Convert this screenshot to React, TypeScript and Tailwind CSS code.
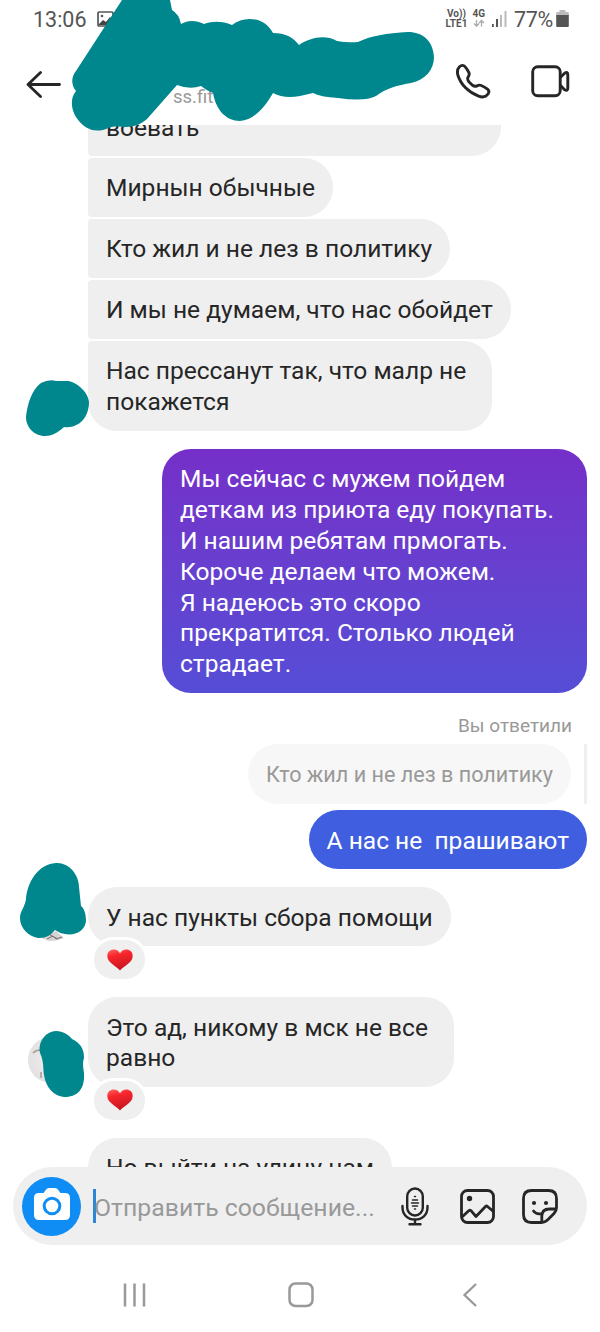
import type { ReactNode } from "react";

const TEAL = "#00868d";

function Bubble({ children, className }: { children: ReactNode; className: string }) {
  return (
    <div className={`w-fit whitespace-pre px-[18px] pb-[12.5px] pt-[15.5px] text-[24.55px] leading-[30.8px] ${className}`}>
      {children}
    </div>
  );
}

function Heart({ id }: { id: string }) {
  return (
    <div className="relative z-10 -mt-[9px] ml-[3px] flex h-[45px] w-[57px] shrink-0 items-center justify-center rounded-full border-[3px] border-white bg-[#efefef]">
      <svg width="26" height="22" viewBox="0 0 26 23" preserveAspectRatio="none">
        <defs>
          <linearGradient id={id} x1="0" y1="0" x2="0.3" y2="1">
            <stop offset="0" stopColor="#ff6660" />
            <stop offset="0.35" stopColor="#f7262b" />
            <stop offset="1" stopColor="#c91522" />
          </linearGradient>
        </defs>
        <path d="M13 22.5C10 18 .3 14.500 .3 7.200 .3 3 3.300 .6 6.600 .6c3 0 5.200 1.500 6.400 4 1.200-2.500 3.400-4 6.400-4 3.300 0 6.300 2.400 6.300 6.600C25.700 14.500 16 18 13 22.500z" fill={`url(#${id})`} />
      </svg>
    </div>
  );
}

function StatusBar() {
  return (
    <div className="flex h-10 items-start pl-[33px] pr-[31px] pt-[7px] text-[#555]">
      <span className="mt-px text-[21.5px] leading-6">13:06</span>
      <svg className="ml-[10px] mt-1" width="17" height="16" viewBox="0 0 17 16">
        <rect x="1" y="1" width="15" height="14" rx="1" fill="none" stroke="#555" strokeWidth="1.700" />
        <path d="M2 13l4-4 3 2 4-5 3 3v5H2z" fill="#444" />
        <circle cx="5" cy="5" r="1.300" fill="#555" />
      </svg>
      <div className="ml-auto flex items-start">
        <div className="mt-[2px] flex flex-col items-center text-[10px] font-bold leading-[9.500px]">
          <span>Vo))</span>
          <span>LTE1</span>
        </div>
        <div className="ml-[5px] mt-[2px] flex flex-col items-center text-[10px] font-bold leading-[10px]">
          <span>4G</span>
          <svg width="12" height="8" viewBox="0 0 12 8" fill="none" stroke="#aaa" strokeWidth="1.300">
            <path d="M3.500 1v6M1 4.500l2.500 2.500L6 4.500M8.500 7.500v-6M6 4l2.500-2.500L11 4" />
          </svg>
        </div>
        <svg className="ml-[7px] mt-1" width="15" height="16" viewBox="0 0 15 16">
          <rect x="0" y="13" width="1.800" height="3" fill="#555" />
          <rect x="4" y="8" width="2" height="8" fill="#555" />
          <rect x="8" y="4" width="2" height="12" fill="#bbb" />
          <rect x="12.500" y="0" width="2" height="16" fill="#bbb" />
        </svg>
        <span className="ml-[7px] mt-px text-[21.500px] leading-6 tracking-[-0.3px]">77%</span>
        <svg className="ml-[3px] mt-[3px]" width="13" height="17" viewBox="0 0 13 17">
          <path d="M3.500 0h6v2H12q.8 0 .8.800V6H.2V2.800Q.2 2 1 2h2.500z" fill="#bbb" />
          <path d="M.2 5h12.600v11q0 1-1 1H1.200q-1 0-1-1z" fill="#555" />
        </svg>
      </div>
    </div>
  );
}

function Header() {
  return (
    <header className="flex h-[85px] items-start pl-[26px] pr-[30px]">
      <svg className="mt-[30px]" width="36" height="28" viewBox="0 0 36 28" fill="none" stroke="#262626" strokeWidth="2.800" strokeLinecap="round" strokeLinejoin="round">
        <path d="M33.500 14.500H2M14.500 2.500L2 14.500l12.500 12" />
      </svg>
      <span className="ml-[111px] mt-[45px] text-[18.500px] leading-6 text-[#999]">ss.fit</span>
      <svg className="ml-auto mt-[23px]" width="36" height="37" viewBox="0 0 36 37" fill="none" stroke="#262626" strokeWidth="2.900" strokeLinejoin="round">
        <path d="M4.500 3.800C6.500 1.900 8.600 1.900 10 3.600C11.800 5.600 13 7.600 14 9.800C14.800 11.600 14 12.700 13 14.300C12 16.200 12.600 17.200 14.300 19.200L17 21.800C19 23.500 20.300 23.800 21.900 22.900C23.600 22 24.600 21.700 26.300 22.500C28.500 23.400 30.500 24.600 32.500 26.200C34.500 27.800 34.300 29.200 33 31C31 33.800 27.700 34.700 23.600 33.200C13.500 29.500 5.800 21.500 3 12.500C1.900 8.800 2.400 5.900 4.500 3.800Z" />
      </svg>
      <svg className="ml-[40px] mt-[25px]" width="39" height="33" viewBox="0 0 39 33" fill="none" stroke="#262626" strokeWidth="2.900" strokeLinejoin="round">
        <rect x="1.700" y="1.700" width="27.500" height="29" rx="5" />
        <path d="M29.300 12.500l4.300-4.300q3.200-1.800 3.200 1.500v13.500q0 3.300-3.200 1.500l-4.300-4.300" />
      </svg>
    </header>
  );
}

function Composer() {
  return (
    <div className="relative z-10 mx-[13px] flex h-[78px] items-center rounded-full bg-[#efefef] pl-[9px] pr-[29px]">
      <div className="flex size-[59px] shrink-0 items-center justify-center rounded-full bg-[#0f8df5]">
        <svg className="-mt-1" width="36" height="33" viewBox="0 0 36 33">
          <path d="M11 3q1.500-3 4-3h6q2.500 0 4 3l1.500 2H31q5 0 5 5v17q0 5-5 5H5q-5 0-5-5V10q0-5 5-5h4.500z" fill="#fff" />
          <circle cx="18" cy="18" r="7.800" fill="none" stroke="#0f8df5" strokeWidth="3" />
        </svg>
      </div>
      <div className="ml-3 h-[34px] w-[3px] shrink-0 bg-[#2f86d6]" />
      <span className="-ml-[2px] mt-[3px] whitespace-nowrap text-[24.8px] leading-8 text-[#999]">Отправить сообщение...</span>
      <div className="ml-auto flex items-center text-[#262626]">
        <svg className="mt-px" width="28" height="39" viewBox="0 0 28 39" fill="none" stroke="currentColor" strokeWidth="2.400" strokeLinecap="round">
          <rect x="6.200" y="1.500" width="15.600" height="27" rx="7.800" />
          <path d="M1.500 19v1.500C1.500 28 7 32.500 14 32.500S26.500 28 26.500 20.500V19M14 32.500V37M8.500 37.200h11" />
          <path d="M13.500 9.500h1M11.500 13h5M10.500 16h7M11.500 19h5M13.500 22h1" strokeWidth="1.500" />
        </svg>
        <svg className="ml-[31px]" width="35" height="35" viewBox="0 0 35 35" fill="none" stroke="currentColor" strokeWidth="2.800" strokeLinejoin="round">
          <rect x="1.500" y="1.500" width="32" height="32" rx="6" />
          <path d="M2 28l7-6.500q1-.8 2 .2L16 27.500 25.500 17.500q1-1 2 0L34 23" />
          <circle cx="9.500" cy="9.500" r="2.700" fill="currentColor" stroke="none" />
        </svg>
        <svg className="ml-[27px]" width="36" height="35" viewBox="0 0 36 35" fill="none" stroke="currentColor" strokeWidth="2.800" strokeLinejoin="round" strokeLinecap="round">
          <path d="M9.500 1.500h17q8 0 8 8v9q0 3.500-2.500 6l-6.500 6.500q-2.500 2.500-6 2.500H9.500q-8 0-8-8V9.500q0-8 8-8z" />
          <path d="M19.800 33v-5.500q0-7.500 7.500-7.500h6.500M11.500 22q3 4 8.500 2.500" />
          <circle cx="12" cy="14" r="2.100" fill="currentColor" stroke="none" />
          <circle cx="24" cy="14" r="2.100" fill="currentColor" stroke="none" />
        </svg>
      </div>
    </div>
  );
}

function NavBar() {
  return (
    <nav className="flex h-[87px] items-start justify-between pl-[122px] pr-[122px] pt-[37px] text-[#999]">
      <svg width="25" height="26" viewBox="0 0 25 26" stroke="currentColor" strokeWidth="2.500">
        <path d="M3 1.500v23M12.500 1.500v23M22 1.500v23" />
      </svg>
      <svg className="-ml-[7px]" width="26" height="26" viewBox="0 0 26 26" fill="none" stroke="currentColor" strokeWidth="2.500">
        <rect x="1.500" y="1.500" width="23" height="22.500" rx="6" />
      </svg>
      <svg width="16" height="26" viewBox="0 0 16 26" fill="none" stroke="currentColor" strokeWidth="2.300">
        <path d="M14 2L2.500 13 14 24" />
      </svg>
    </nav>
  );
}

function Scribbles() {
  return (
    <svg className="pointer-events-none absolute left-0 top-0 z-20" width="600" height="1332" viewBox="0 0 600 1332">
      <defs>
        <radialGradient id="avatar">
          <stop offset="0" stopColor="#f0eeee" />
          <stop offset="1" stopColor="#e3e1e1" />
        </radialGradient>
      </defs>
      <circle cx="51" cy="1060" r="23" fill="url(#avatar)" />
      <path d="M33 1053q3-3 7-3M41 1072v6" stroke="#a99c91" strokeWidth="1.500" fill="none" />
      <path d="M41 938l15-7 8 7q-6 3-15 3z" fill="#d5d3d3" />
      <path d="M47 939l6-3 3 3 6-2M50 935l8 4" stroke="#77716f" strokeWidth="1" fill="none" />
      <g fill={TEAL}>
        <path d="M122 0L76 71C71 77 71 85 76 91C70 98 71 109 76 117C84 129 94 133 106 129Q113 125 123 127C134 127 140 125 147 119L177 85Q190 90 201 86Q207 91 213 93C216 110 226 121 240 121C253 120 264 109 273 93Q284 99 300 96L313 93Q320 97 338 98Q365 102 376 96C387 88 395 86 411 83C426 80 434 69 434 57C433 41 423 32 408 32C387 33 370 36 358 42Q347 43 337 41C324 34 310 38 299 45C293 37 285 33 273 33C265 17 244 15 232 25C222 21 213 21 204 24C196 20 188 20 181 24Q179 14 172 10L170 0Z" />
        <path d="M41 383Q49 379 56 381H67C75 381 88 391 89 402C89 418 78 429 64 427C60 431 53 436 45 436C34 436 26 427 26 417C27 405 32 389 41 383Z" />
        <path d="M56 863C68 862 79 874 79 887L81 906C85 909 86 916 86 921C85 931 75 936 65 934Q59 933 55 930Q48 939 38 938C28 936 20 928 20 918C20 911 25 907 26 899C27 884 37 864 56 863Z" />
        <path d="M56 1031C63 1031 69 1035 72 1039C80 1043 84 1048 84 1058Q82 1063 84 1073C85 1090 77 1097 64 1097C54 1096 46 1088 44 1075C43 1069 44 1061 40 1053C38 1043 44 1032 56 1031Z" />
      </g>
    </svg>
  );
}

export default function App() {
  const incoming = "rounded-l-[4px] rounded-r-[29px] bg-[#efefef] text-[#262626]";
  return (
    <div className="relative flex h-[1332px] w-[600px] flex-col overflow-hidden bg-white font-['Roboto','Noto_Sans',sans-serif]">
      <StatusBar />
      <Header />
      <main className="flex h-[1042px] shrink-0 flex-col overflow-hidden pl-[88px] pr-[13px]">
        <div className="-mt-[28px] flex shrink-0 flex-col gap-[2.200px]">
          <Bubble className={`${incoming} w-[413px]!`}>воевать</Bubble>
          <Bubble className={incoming}>Мирнын обычные</Bubble>
          <Bubble className={incoming}>Кто жил и не лез в политику</Bubble>
          <Bubble className={incoming}>И мы не думаем, что нас обойдет</Bubble>
          <Bubble className={`${incoming} rounded-bl-[29px]! w-[404px]!`}>{"Нас прессанут так, что малр не\nпокажется"}</Bubble>
        </div>
        <Bubble className="mt-[18.400px] w-[425px]! shrink-0 self-end rounded-[29px] bg-linear-to-b from-[#752fc8] to-[#554dd6] text-white">
          {"Мы сейчас с мужем пойдем\nдеткам из приюта еду покупать.\nИ нашим ребятам прмогать.\nКороче делаем что можем.\nЯ надеюсь это скоро\nпрекратится. Столько людей\nстрадает."}
        </Bubble>
        <div className="mt-[21px] shrink-0 self-end pr-[15px] text-[19px] leading-6 text-[#999]">Вы ответили</div>
        <div className="mt-[6.500px] flex shrink-0 gap-[13px] self-end">
          <div className="flex h-[60px] items-center whitespace-pre rounded-full bg-[#f7f7f7] px-[18px] pt-[2px] text-[21.600px] text-[#999]">Кто жил и не лез в политику</div>
          <div className="w-[3px] bg-[#efefef]" />
        </div>
        <Bubble className="mt-[6px] shrink-0 self-end rounded-full bg-[#3f5fe0] text-white">{"А нас не  прашивают"}</Bubble>
        <Bubble className="mt-[18.500px] shrink-0 rounded-[29px] bg-[#efefef] text-[#262626]">У нас пункты сбора помощи</Bubble>
        <Heart id="heart-one" />
        <Bubble className="mt-[15px] w-[366px]! shrink-0 rounded-[29px] bg-[#efefef] text-[#262626]">{"Это ад, никому в мск не все\nравно"}</Bubble>
        <Heart id="heart-two" />
        <Bubble className="mt-[15px] shrink-0 rounded-[29px] bg-[#efefef] text-[#262626]">Но выйти на улицу нам</Bubble>
      </main>
      <Composer />
      <NavBar />
      <Scribbles />
    </div>
  );
}
